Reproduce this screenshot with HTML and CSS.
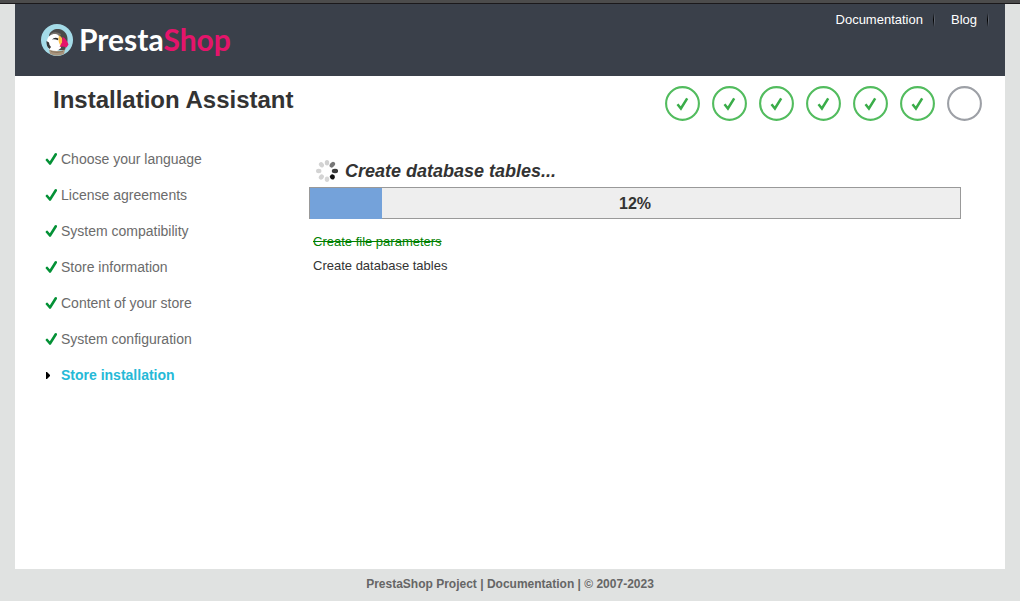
FILE: index.html
```html
<!DOCTYPE html>
<html lang="en">
<head>
<meta charset="utf-8">
<title>PrestaShop Installation Assistant</title>
<link rel="stylesheet" href="styles.css">
</head>
<body>
<svg class="defs" aria-hidden="true">
  <symbol id="step-done" viewBox="0 0 35 35">
    <circle cx="17.5" cy="17.5" r="16.4" fill="none" stroke="#52bc5e" stroke-width="2.1"/>
    <path d="M12.500 18.300l3.400 4.200L22.200 12.300" fill="none" stroke="#3aad49" stroke-width="2.500"/>
  </symbol>
  <symbol id="tick" viewBox="0 0 12 14">
    <path d="M2 8L5 11.500L10.800 2.300" fill="none" stroke="#049136" stroke-width="2.600" stroke-linecap="round" stroke-linejoin="round"/>
  </symbol>
</svg>
<div class="page">
  <header class="header">
    <a class="logo" href="#" aria-label="PrestaShop">
      <svg class="logo-mark" viewBox="0 0 32 32" aria-hidden="true">
        <circle cx="16" cy="16" r="16" fill="#a4dbe8"/>
        <path d="M8 11C10 6 14 4.500 18 5C24 6 27 11 26.500 17L24 26H9Z" fill="#4a4a49"/>
        <path d="M10 9.500Q15 7 20 10L19 12Q14 9.500 9 11.500Z" fill="#77716b"/>
        <path d="M6 17C6.500 12.500 10 10 14 10C17 10 19 12 19 16L20 24L16 27H10C6.500 24.500 5.500 21 6 17Z" fill="#fff"/>
        <path d="M5.500 17L8 18.500Q8 21 10 23L8.500 25Q5 22 5.500 17Z" fill="#343536"/>
        <path d="M11 15.500Q13.500 12.800 17.500 14.500L17 16.200Q14 15 11 15.500Z" fill="#2b2c2e"/>
        <path d="M18 11.500Q22 13 21.500 18L19.500 22Q16.500 17 18 11.500Z" fill="#fbc04b"/>
        <path d="M21.500 13Q25 14 27.500 20.500L25.500 23.500Q22 22 18.500 23L21 18.500Z" fill="#e5146b"/>
        <path d="M8 25.500Q16 28.500 24 25.500L23 30Q16 33.500 9 30Z" fill="#a8957e"/>
        <path d="M10 27.500Q16 29.500 22 27.500" fill="none" stroke="#8a775f"/>
      </svg>
      <span class="logo-text">Presta<span class="logo-shop">Shop</span></span>
    </a>
    <nav class="links" aria-label="Help">
      <a href="#">Documentation</a>
      <a href="#">Blog</a>
    </nav>
  </header>

  <main class="sheet">
    <div class="heading">
      <h1 class="title">Installation Assistant</h1>
      <div class="steps" role="img" aria-label="6 of 7 steps done">
        <svg><use href="#step-done"/></svg>
        <svg><use href="#step-done"/></svg>
        <svg><use href="#step-done"/></svg>
        <svg><use href="#step-done"/></svg>
        <svg><use href="#step-done"/></svg>
        <svg><use href="#step-done"/></svg>
        <svg viewBox="0 0 35 35"><circle cx="17.500" cy="17.500" r="16.400" fill="none" stroke="#9da0a6" stroke-width="2.100"/></svg>
      </div>
    </div>

    <div class="columns">
      <ol class="menu">
        <li><svg><use href="#tick"/></svg>Choose your language</li>
        <li><svg><use href="#tick"/></svg>License agreements</li>
        <li><svg><use href="#tick"/></svg>System compatibility</li>
        <li><svg><use href="#tick"/></svg>Store information</li>
        <li><svg><use href="#tick"/></svg>Content of your store</li>
        <li><svg><use href="#tick"/></svg>System configuration</li>
        <li class="current" aria-current="step"><svg viewBox="0 0 12 14"><path d="M1 4h1l3 3v1l-3 3h-1z" fill="#000"/></svg>Store installation</li>
      </ol>

      <section class="install">
        <h2 class="status">
          <svg class="spinner" viewBox="-11 -11 22 22" aria-hidden="true">
            <ellipse cy="-8.300" rx="2.200" ry="2.700" fill="#d0d0d0"/>
            <ellipse cy="-8.300" rx="2.300" ry="3.200" fill="#777" transform="rotate(40)"/>
            <ellipse cy="-8" rx="2.200" ry="3.200" fill="#3c3c3c" transform="rotate(90)"/>
            <ellipse cy="-8" rx="2.400" ry="2.600" fill="#111" transform="rotate(138)"/>
            <ellipse cy="-8.300" rx="2.200" ry="2.700" fill="#d6d6d6" transform="rotate(180)"/>
            <ellipse cy="-8.300" rx="2.300" ry="2.800" fill="#d3d3d3" transform="rotate(223)"/>
            <ellipse cy="-8.300" rx="2.200" ry="2.700" fill="#d3d3d3" transform="rotate(270)"/>
            <ellipse cy="-8.300" rx="2.300" ry="2.800" fill="#d3d3d3" transform="rotate(318)"/>
          </svg>
          Create database tables...
        </h2>
        <div class="progress" role="progressbar" aria-valuenow="12" aria-valuemin="0" aria-valuemax="100" aria-label="Installation progress">
          <div class="bar" style="width: 11%"></div>
          <span class="percent">12%</span>
        </div>
        <ul class="tasks">
          <li class="done">Create file parameters</li>
          <li>Create database tables</li>
        </ul>
      </section>
    </div>
  </main>

  <footer class="footer">
    <a href="#">PrestaShop Project</a> | <a href="#">Documentation</a> | © 2007-2023
  </footer>
</div>
</body>
</html>
```

FILE: styles.css
```css
* {
  box-sizing: border-box;
}

body {
  margin: 0;
  background: #e0e2e1;
  color: #333;
  font-family: "Liberation Sans", Arial, sans-serif;
  font-size: 13px;
}

a {
  color: inherit;
  text-decoration: none;
}

h1, h2, ol, ul {
  margin: 0;
  padding: 0;
}

ol, ul {
  list-style: none;
}

.defs {
  display: none;
}

.page {
  display: flex;
  flex-direction: column;
  min-height: 100vh;
  padding: 0 15px;
  border-top: 3px solid #4c4c4c;
  box-shadow: inset 0 1px #1b191b;
}

.header {
  display: flex;
  justify-content: space-between;
  align-items: flex-start;
  margin-top: 1px;
  padding: 9px 16px 20px 26px;
  background: #3a404a;
}

.logo {
  display: flex;
  align-items: center;
  gap: 6px;
  margin-top: 11px;
}

.logo-mark {
  width: 32px;
  height: 32px;
}

.logo-text {
  padding-bottom: 2px;
  color: #fff;
  font-family: Lato, sans-serif;
  font-size: 30px;
  font-weight: 700;
  line-height: 30px;
}

.logo-shop {
  color: #e5146b;
}

.links {
  display: flex;
  gap: 16px;
  color: #fff;
  line-height: 14px;
}

.links a {
  padding-right: 12px;
  background: linear-gradient(#3a404a, #000 50%, #3a404a) right 1px center / 1px 100% no-repeat,
    linear-gradient(#3a404a, #626771 50%, #3a404a) right / 1px 100% no-repeat;
}

.sheet {
  flex: 1;
  padding: 10px 23px 24px 30px;
  background: #fff;
}

.heading {
  display: flex;
  justify-content: space-between;
  padding-left: 8px;
}

.title {
  font-size: 24px;
  line-height: 28px;
}

.steps {
  display: flex;
  gap: 12px;
}

.steps svg {
  width: 35px;
  height: 35px;
}

.columns {
  display: grid;
  grid-template-columns: 264px 1fr;
  padding: 20px 21px 0 0;
}

.menu {
  color: #6b6b6b;
  font-size: 14px;
  line-height: 36px;
}

.menu li {
  display: flex;
  align-items: center;
  gap: 4px;
}

.menu svg {
  width: 12px;
  height: 14px;
}

.menu .current {
  color: #25b9d7;
  font-weight: bold;
}

.install {
  padding-top: 18px;
}

.status {
  display: flex;
  align-items: center;
  gap: 7px;
  padding-left: 7px;
  font-size: 18px;
  font-style: italic;
  line-height: 24px;
}

.spinner {
  width: 22px;
  height: 22px;
}

.progress {
  display: grid;
  height: 32px;
  margin-top: 4px;
  border: 1px solid #999;
  background: #eee;
}

.bar,
.percent {
  grid-area: 1 / 1;
}

.bar {
  background: #74a2da;
}

.percent {
  font-size: 16px;
  font-weight: bold;
  line-height: 31px;
  text-align: center;
}

.tasks {
  padding: 11px 4px;
  line-height: 24px;
}

.tasks .done {
  color: #008000;
  text-decoration: line-through;
}

.footer {
  padding: 8px 0 10px;
  color: #666;
  font-size: 12px;
  font-weight: bold;
  line-height: 14px;
  text-align: center;
}
```
